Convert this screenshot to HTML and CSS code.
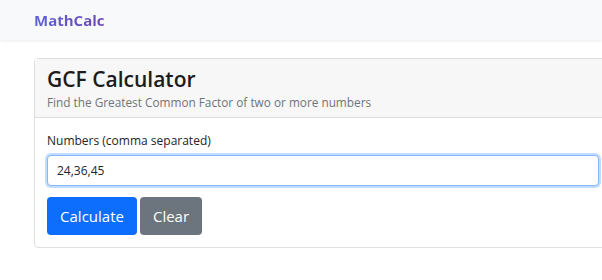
FILE: index.html
```html
<!DOCTYPE html>
<html lang="en">
<head>
<meta charset="UTF-8" />
<title>GCF Calculator - MathCalc</title>
<link rel="stylesheet" href="styles.css">
</head>
<body>

<nav class="navbar">
  <a class="brand" href="#">MathCalc</a>
</nav>

<main class="container">
  <div class="card">
    <div class="card-header">
      <h1 class="card-title">GCF Calculator</h1>
      <p class="card-sub">Find the Greatest Common Factor of two or more numbers</p>
    </div>
    <div class="card-body">
      <label class="label" for="numbers">Numbers (comma separated)</label>
      <input class="input" id="numbers" type="text" value="24,36,45" />
      <div class="actions">
        <button class="btn btn-primary">Calculate</button>
        <button class="btn btn-secondary">Clear</button>
      </div>
    </div>
  </div>
</main>

</body>
</html>
```
FILE: styles.css
```css
/* Reset */
* {
  margin: 0; padding: 0; box-sizing: border-box;
}
body {
  background: #fff;
  color: #212529;
  font-family: 'Open Sans', 'Noto Sans', sans-serif;
  overflow: hidden;
}
.navbar {
  height: 40px;
  display: flex;
  align-items: center;
  padding-left: 34px;
  background: #f8f9fa;
  box-shadow: 0 1px 3px rgba(0,0,0,0.08);
}
.brand {
  font-size: 15px;
  font-weight: bold;
  text-decoration: none;
  background: linear-gradient(90deg, #5b63d8, #7048b8);
  -webkit-background-clip: text;
  background-clip: text;
  color: transparent;
}
.container {
  padding: 18px 0 0 34px;
}
.card {
  width: 578px;
  border: 1px solid #dfdfdf;
  border-radius: 4px;
  background: #fff;
}
.card-header {
  background: #f7f7f7;
  border-bottom: 1px solid #dfdfdf;
  padding: 6px 12px 6px;
}
.card-title {
  font-size: 21px;
  font-weight: 600;
  line-height: 29px;
  color: #1c1c1c;
}
.card-sub {
  font-size: 11.8px;
  line-height: 17px;
  color: #6c757d;
}
.card-body {
  padding: 14px 12px 12px;
}
.label {
  display: block;
  font-size: 12px;
  line-height: 18px;
  margin-bottom: 5px;
}
.input {
  display: block;
  width: 100%;
  height: 31px;
  padding: 0 9px;
  font-family: inherit;
  font-size: 12px;
  color: #212529;
  border: 1px solid #86b7fe;
  border-radius: 4px;
  box-shadow: 0 0 0 2px rgba(13,110,253,0.25);
  outline: none;
}
.actions {
  display: flex;
  gap: 3px;
  margin-top: 11px;
}
.btn {
  height: 38px;
  padding: 0 12px;
  border: none;
  border-radius: 4px;
  font-family: inherit;
  font-size: 15px;
  color: #fff;
  cursor: pointer;
}
.btn-primary {
  background: #0d6efd;
  width: 90px;
}
.btn-secondary {
  background: #6c757d;
  width: 62px;
}
```
